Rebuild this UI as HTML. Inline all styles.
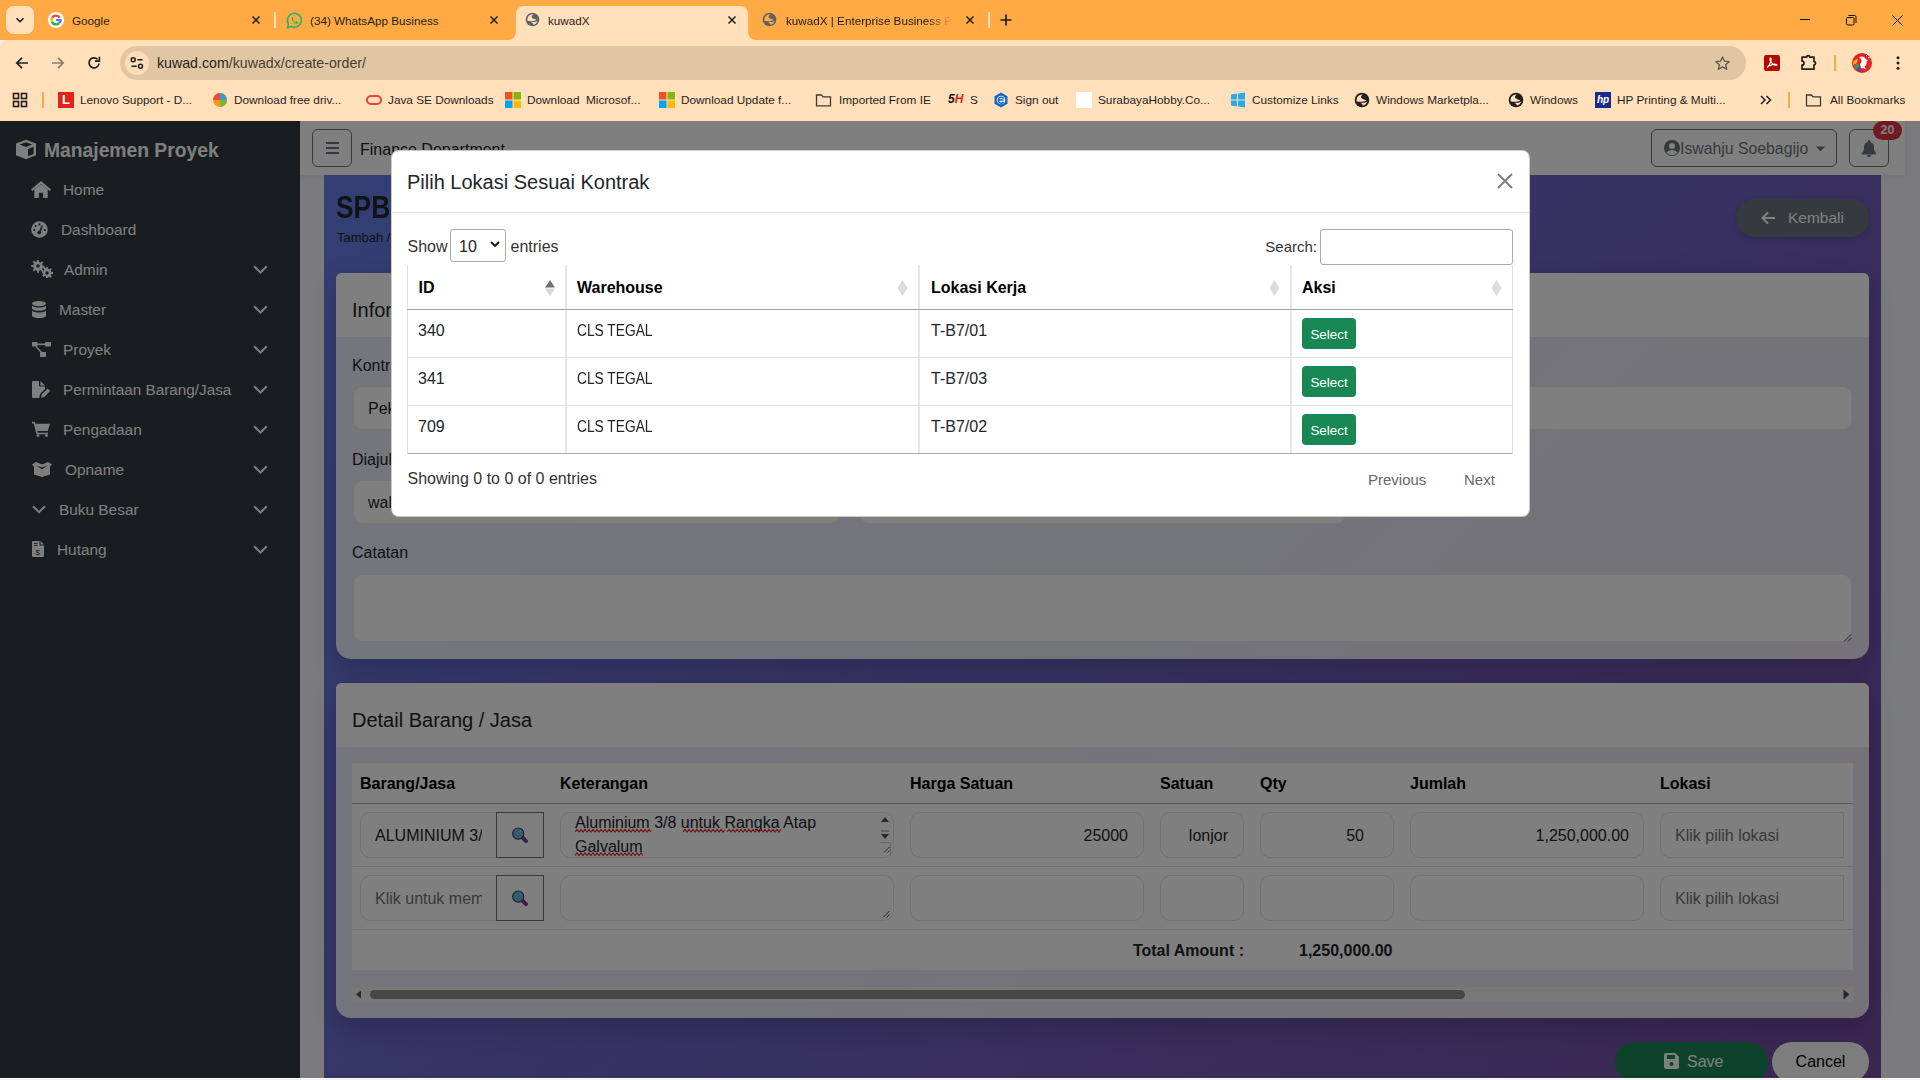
<!DOCTYPE html>
<html><head><meta charset="utf-8">
<style>
*{box-sizing:border-box}
html,body{margin:0;padding:0}
body{width:1920px;height:1080px;overflow:hidden;position:relative;font-family:"Liberation Sans",sans-serif;background:#f5efe8;color:#212529}
.a{position:absolute}
.t{position:absolute;white-space:nowrap;line-height:1}
svg{display:block}
/* chrome */
#tabs{left:0;top:0;width:1920px;height:40px;background:#FFAA45}
#toolbar{left:0;top:40px;width:1920px;height:81px;background:#FFE0BB;border-top-left-radius:8px}
.tabtxt{font-size:11.7px;color:#1f1f1f;top:15px}
.bm{font-size:11.8px;color:#1f1f1f;top:95px}
/* page */
#page{left:0;top:121px;width:1920px;height:957px;overflow:hidden;background:#f6f7fa}
</style></head>
<body>
<!-- ================= BROWSER CHROME ================= -->
<div id="tabs" class="a"></div>
<!-- tab dropdown -->
<div class="a" style="left:6px;top:6px;width:28px;height:28px;border-radius:8px;background:#FFE0BB"></div>
<svg class="a" style="left:14px;top:14px" width="12" height="12" viewBox="0 0 12 12"><path d="M2.5 4.2 6 7.7 9.5 4.2" fill="none" stroke="#1f1f1f" stroke-width="1.6"/></svg>
<!-- tab 1 Google -->
<svg class="a" style="left:48px;top:12px" width="16" height="16" viewBox="0 0 16 16"><circle cx="8" cy="8" r="8" fill="#fff"/><circle cx="8" cy="8" r="4.4" fill="none" stroke="#4285F4" stroke-width="2.4" stroke-dasharray="3.456 27.646" stroke-dashoffset="-0.000"/><circle cx="8" cy="8" r="4.4" fill="none" stroke="#34A853" stroke-width="2.4" stroke-dasharray="8.063 27.646" stroke-dashoffset="-3.456"/><circle cx="8" cy="8" r="4.4" fill="none" stroke="#FBBC05" stroke-width="2.4" stroke-dasharray="4.608 27.646" stroke-dashoffset="-11.519"/><circle cx="8" cy="8" r="4.4" fill="none" stroke="#EA4335" stroke-width="2.4" stroke-dasharray="8.294 27.646" stroke-dashoffset="-16.127"/><rect x="8" y="6.9" width="5.6" height="2.3" fill="#4285F4"/></svg>
<div class="t tabtxt" style="left:72px">Google</div>
<svg class="a" style="left:250px;top:14px" width="12" height="12" viewBox="0 0 12 12"><path d="M2.5 2.5l7 7M9.5 2.5l-7 7" stroke="#1f1f1f" stroke-width="1.5"/></svg>
<div class="a" style="left:274px;top:12px;width:2px;height:16px;background:#FFE0BB"></div>
<!-- tab 2 WhatsApp -->
<svg class="a" style="left:286px;top:11.5px" width="17" height="17" viewBox="0 0 17 17">
<path d="M8.5 1.3a7 7 0 0 0-6 10.6L1.5 15.6l3.8-1a7 7 0 1 0 3.2-13.3z" fill="none" stroke="#24b46a" stroke-width="1.6"/>
<path d="M6.2 5c.3 0 .5 0 .7.5l.6 1.3c.1.2 0 .4-.1.5l-.4.5c-.1.1-.1.3 0 .4.5.9 1.3 1.6 2.2 2 .1.1.3 0 .4-.1l.5-.6c.1-.2.3-.2.5-.1l1.3.6c.2.1.3.3.3.4 0 .8-.7 1.5-1.5 1.5-2.5-.3-4.6-2.3-5-4.8C5.6 5.8 5.8 5 6.2 5z" fill="#24b46a"/>
</svg>
<div class="t tabtxt" style="left:310px">(34) WhatsApp Business</div>
<svg class="a" style="left:488px;top:14px" width="12" height="12" viewBox="0 0 12 12"><path d="M2.5 2.5l7 7M9.5 2.5l-7 7" stroke="#1f1f1f" stroke-width="1.5"/></svg>
<!-- active tab -->
<div class="a" style="left:516px;top:6px;width:232px;height:40px;background:#FFE0BB;border-radius:8px 8px 0 0"></div>
<div class="a" style="left:508px;top:32px;width:8px;height:8px;background:#FFE0BB"></div>
<div class="a" style="left:500px;top:24px;width:16px;height:16px;background:#FFAA45;border-radius:0 0 8px 0"></div>
<div class="a" style="left:748px;top:32px;width:8px;height:8px;background:#FFE0BB"></div>
<div class="a" style="left:748px;top:24px;width:16px;height:16px;background:#FFAA45;border-radius:0 0 0 8px"></div>
<svg class="a" style="left:525px;top:12px" width="15" height="15" viewBox="0 0 16 16"><circle cx="8" cy="8" r="7.3" fill="#5f6368"/><clipPath id="gc525"><circle cx="8" cy="8" r="5.5"/></clipPath><g clip-path="url(#gc525)" fill="#FFE0BB"><path d="M1.5 9.5V1.5H9.6C8.2 3.2 6.6 4.2 7.2 5.8 7.8 7.2 10.4 7.4 12.4 8.4 10 9.8 6.6 9.9 4.6 9.7 3.4 9.6 2.4 9.6 1.5 9.5z"/><path d="M6.2 10.7C8.4 10.8 10.4 10.9 12 10.2 12.8 9.8 13.8 9.4 14.5 9.2V14.5H8.2C9.2 13.2 8.8 11.8 6.2 10.7z"/></g></svg>
<div class="t tabtxt" style="left:548px">kuwadX</div>
<svg class="a" style="left:726px;top:14px" width="12" height="12" viewBox="0 0 12 12"><path d="M2.5 2.5l7 7M9.5 2.5l-7 7" stroke="#1f1f1f" stroke-width="1.5"/></svg>
<!-- tab 4 -->
<svg class="a" style="left:762px;top:12px" width="15" height="15" viewBox="0 0 16 16"><circle cx="8" cy="8" r="7.3" fill="#5f6368"/><clipPath id="gc762"><circle cx="8" cy="8" r="5.5"/></clipPath><g clip-path="url(#gc762)" fill="#FFAA45"><path d="M1.5 9.5V1.5H9.6C8.2 3.2 6.6 4.2 7.2 5.8 7.8 7.2 10.4 7.4 12.4 8.4 10 9.8 6.6 9.9 4.6 9.7 3.4 9.6 2.4 9.6 1.5 9.5z"/><path d="M6.2 10.7C8.4 10.8 10.4 10.9 12 10.2 12.8 9.8 13.8 9.4 14.5 9.2V14.5H8.2C9.2 13.2 8.8 11.8 6.2 10.7z"/></g></svg>
<div class="t tabtxt" style="left:786px;width:166px;overflow:hidden;-webkit-mask-image:linear-gradient(90deg,#000 85%,transparent)">kuwadX | Enterprise Business Platform</div>
<svg class="a" style="left:964px;top:14px" width="12" height="12" viewBox="0 0 12 12"><path d="M2.5 2.5l7 7M9.5 2.5l-7 7" stroke="#1f1f1f" stroke-width="1.5"/></svg>
<div class="a" style="left:988px;top:12px;width:2px;height:16px;background:#FFE0BB"></div>
<svg class="a" style="left:999px;top:13px" width="14" height="14" viewBox="0 0 14 14"><path d="M7 1.5v11M1.5 7h11" stroke="#1f1f1f" stroke-width="1.7"/></svg>
<!-- window controls -->
<div class="a" style="left:1800px;top:19px;width:10px;height:1px;background:#111"></div>
<svg class="a" style="left:1844px;top:13px" width="14" height="14" viewBox="0 0 14 14"><rect x="2.5" y="4.5" width="7.5" height="7.5" rx="1.2" fill="none" stroke="#111" stroke-width="1"/><path d="M4.5 2.5H10.5A1.5 1.5 0 0 1 12 4V10" fill="none" stroke="#111" stroke-width="1"/></svg>
<svg class="a" style="left:1892px;top:15px" width="11" height="11" viewBox="0 0 11 11"><path d="M.5.5l10 10M10.5.5l-10 10" stroke="#111" stroke-width="1"/></svg>
<div id="toolbar" class="a"></div>
<div class="a" style="left:1912px;top:40px;width:8px;height:8px;background:#FFE0BB"></div>
<!-- nav -->
<svg class="a" style="left:14px;top:55px" width="16" height="16" viewBox="0 0 16 16"><path d="M14 8H3M8 2.8 2.8 8 8 13.2" fill="none" stroke="#1f1f1f" stroke-width="1.7"/></svg>
<svg class="a" style="left:50px;top:55px" width="16" height="16" viewBox="0 0 16 16"><path d="M2 8h11M8 2.8 13.2 8 8 13.2" fill="none" stroke="#8a7d6e" stroke-width="1.7"/></svg>
<svg class="a" style="left:86px;top:55px" width="16" height="16" viewBox="0 0 16 16"><path d="M13 8.5A5 5 0 1 1 11.5 4.3" fill="none" stroke="#1f1f1f" stroke-width="1.7"/><path d="M13.4 1.8v4.4H9" fill="none" stroke="#1f1f1f" stroke-width="1.7"/></svg>
<!-- omnibox -->
<div class="a" style="left:120px;top:46px;width:1626px;height:34px;border-radius:17px;background:#E0C6A3"></div>
<div class="a" style="left:125px;top:51px;width:24px;height:24px;border-radius:12px;background:#FDDDB7"></div>
<svg class="a" style="left:129px;top:55px" width="16" height="16" viewBox="0 0 16 16"><path d="M8.3 4.7h5.2M2.5 11.2h5.2" stroke="#1f1f1f" stroke-width="1.5"/><circle cx="4.2" cy="4.7" r="2" fill="none" stroke="#1f1f1f" stroke-width="1.5"/><circle cx="11.5" cy="11.2" r="2" fill="none" stroke="#1f1f1f" stroke-width="1.5"/></svg>
<div class="t" style="left:157px;top:56px;font-size:14.2px;color:#1f1f1f">kuwad.com<span style="color:#4a4036">/kuwadx/create-order/</span></div>
<svg class="a" style="left:1713.5px;top:54.5px" width="17" height="17" viewBox="0 0 17 17"><path d="M8.5 2l2 4.2 4.6.5-3.4 3.1 1 4.5-4.2-2.4-4.2 2.4 1-4.5-3.4-3.1 4.6-.5z" fill="none" stroke="#5b5650" stroke-width="1.3" stroke-linejoin="round"/></svg>
<!-- extensions -->
<div class="a" style="left:1764px;top:55px;width:16px;height:16px;background:#B30B00;border-radius:2px"></div>
<svg class="a" style="left:1764px;top:55px" width="16" height="16" viewBox="0 0 16 16"><path d="M3 12.5c1.5-1 3-3.5 4-7 .3-1.3.2-2.5-.5-2.5s-.7 1.5 0 3c1 2 3 4 5.5 4.3 1 .1 1.2-.6.5-.9-1.5-.5-5 .2-7.5 1.5C4 11.5 3 12.5 3 12.5z" fill="none" stroke="#fff" stroke-width="1.1"/></svg>
<svg class="a" style="left:1800px;top:54px" width="18" height="17" viewBox="0 0 18 17"><path d="M2 3.2H6.6A1.6 1.6 0 0 1 9.8 3.2H14V7.6A1.6 1.6 0 0 1 14 10.8V15.2H2V11.2A1.8 1.8 0 0 0 2 7.2z" fill="none" stroke="#1f1f1f" stroke-width="1.7" stroke-linejoin="round"/></svg>
<div class="a" style="left:1834px;top:55px;width:2px;height:16px;background:#FFAA45"></div>
<svg class="a" style="left:1852px;top:53px" width="20" height="20" viewBox="0 0 20 20"><circle cx="10" cy="10" r="10" fill="#e4202a"/><path d="M1.5 8 6 5.5 5 10 1 12z" fill="#f5b400"/><path d="M2 12.5 6 10.5 7 15 3.5 16z" fill="#2aa84a"/><path d="M5 15.5 8 13 9 18 6 18z" fill="#1e64c8"/><path d="M7 4c3-1.5 6 0 7 2.5l2 .5-1.5 1.5c.5 2-.5 4-2 5l1.5 3-2.5-1.5c-1 .5-2 .5-2.5 0L8 11c1-1 2-2 1.5-3.5C9 6 8 5 7 4z" fill="#fff"/><path d="M14 3l1.5-1.5M16 5l1.5-.5" stroke="#fff" stroke-width="1"/></svg>
<svg class="a" style="left:1890px;top:55px" width="16" height="16" viewBox="0 0 16 16"><circle cx="8" cy="2.8" r="1.5" fill="#1f1f1f"/><circle cx="8" cy="8" r="1.5" fill="#1f1f1f"/><circle cx="8" cy="13.2" r="1.5" fill="#1f1f1f"/></svg>

<!-- bookmarks -->
<svg class="a" style="left:12px;top:92px" width="16" height="16" viewBox="0 0 16 16"><g fill="none" stroke="#1f1f1f" stroke-width="1.6"><rect x="1.5" y="1.5" width="5" height="5"/><rect x="9.5" y="1.5" width="5" height="5"/><rect x="1.5" y="9.5" width="5" height="5"/><rect x="9.5" y="9.5" width="5" height="5"/></g></svg>
<div class="a" style="left:42px;top:92px;width:2px;height:16px;background:#FFAA45"></div>
<div class="a" style="left:58px;top:92px;width:16px;height:16px;background:#E2231A"></div>
<div class="t" style="left:62px;top:93px;font-size:13px;font-weight:bold;color:#fff">L</div>
<div class="t bm" style="left:80px">Lenovo Support - D...</div>
<svg class="a" style="left:212px;top:92px" width="16" height="16" viewBox="0 0 16 16"><circle cx="8" cy="8" r="7" fill="#f39c12"/><path d="M8 1a7 7 0 0 1 7 7H8z" fill="#3d9ad1"/><path d="M1 8a7 7 0 0 1 7-7v7z" fill="#e84c3d"/><path d="M8 8h7a7 7 0 0 1-7 7z" fill="#7cb342"/></svg>
<div class="t bm" style="left:234px">Download free driv...</div>
<div class="a" style="left:366px;top:95px;width:16px;height:10px;border:2px solid #e8423b;border-radius:6px"></div>
<div class="t bm" style="left:388px">Java SE Downloads</div>
<svg class="a" style="left:505px;top:92px" width="16" height="16" viewBox="0 0 16 16"><rect x="0" y="0" width="7.5" height="7.5" fill="#F25022"/><rect x="8.5" y="0" width="7.5" height="7.5" fill="#7FBA00"/><rect x="0" y="8.5" width="7.5" height="7.5" fill="#00A4EF"/><rect x="8.5" y="8.5" width="7.5" height="7.5" fill="#FFB900"/></svg>
<div class="t bm" style="left:527px">Download&nbsp; Microsof...</div>
<svg class="a" style="left:659px;top:92px" width="16" height="16" viewBox="0 0 16 16"><rect x="0" y="0" width="7.5" height="7.5" fill="#F25022"/><rect x="8.5" y="0" width="7.5" height="7.5" fill="#7FBA00"/><rect x="0" y="8.5" width="7.5" height="7.5" fill="#00A4EF"/><rect x="8.5" y="8.5" width="7.5" height="7.5" fill="#FFB900"/></svg>
<div class="t bm" style="left:681px">Download Update f...</div>
<svg class="a" style="left:815px;top:92px" width="17" height="16" viewBox="0 0 17 16"><path d="M1.5 3h5l1.5 1.8h7.5v9H1.5z" fill="none" stroke="#3a3a3a" stroke-width="1.3"/></svg>
<div class="t bm" style="left:839px">Imported From IE</div>
<div class="t" style="left:948px;top:93px;font-size:12px;font-weight:bold;font-style:italic;color:#111">5<span style="color:#d22">H</span></div>
<div class="t bm" style="left:970px">S</div>
<svg class="a" style="left:993px;top:92px" width="16" height="16" viewBox="0 0 16 16"><path d="M8 .5 14.5 4.2v7.6L8 15.5 1.5 11.8V4.2z" fill="#1565c0"/><circle cx="8" cy="8" r="4.3" fill="#fff"/><path d="M5.3 8h5.4M10.6 10A3 3 0 1 1 10.7 6.5" fill="none" stroke="#1565c0" stroke-width="1.5"/></svg>
<div class="t bm" style="left:1015px">Sign out</div>
<div class="a" style="left:1076px;top:92px;width:16px;height:16px;background:#fff"></div>
<div class="t bm" style="left:1098px">SurabayaHobby.Co...</div>
<svg class="a" style="left:1230px;top:92px" width="16" height="16" viewBox="0 0 16 16"><path d="M1 2.5l6-.9v5.9H1zM8 1.5l7-1v7H8zM1 8.5h6v5.9l-6-.9zM8 8.5h7v7l-7-1z" fill="#29A8EA"/></svg>
<div class="t bm" style="left:1252px">Customize Links</div>
<svg class="a" style="left:1354px;top:92px" width="16" height="16" viewBox="0 0 16 16"><circle cx="8" cy="8" r="7.3" fill="#1f1f1f"/><clipPath id="gc1354"><circle cx="8" cy="8" r="5.5"/></clipPath><g clip-path="url(#gc1354)" fill="#FFE0BB"><path d="M1.5 9.5V1.5H9.6C8.2 3.2 6.6 4.2 7.2 5.8 7.8 7.2 10.4 7.4 12.4 8.4 10 9.8 6.6 9.9 4.6 9.7 3.4 9.6 2.4 9.6 1.5 9.5z"/><path d="M6.2 10.7C8.4 10.8 10.4 10.9 12 10.2 12.8 9.8 13.8 9.4 14.5 9.2V14.5H8.2C9.2 13.2 8.8 11.8 6.2 10.7z"/></g></svg>
<div class="t bm" style="left:1376px">Windows Marketpla...</div>
<svg class="a" style="left:1508px;top:92px" width="16" height="16" viewBox="0 0 16 16"><circle cx="8" cy="8" r="7.3" fill="#1f1f1f"/><clipPath id="gc1508"><circle cx="8" cy="8" r="5.5"/></clipPath><g clip-path="url(#gc1508)" fill="#FFE0BB"><path d="M1.5 9.5V1.5H9.6C8.2 3.2 6.6 4.2 7.2 5.8 7.8 7.2 10.4 7.4 12.4 8.4 10 9.8 6.6 9.9 4.6 9.7 3.4 9.6 2.4 9.6 1.5 9.5z"/><path d="M6.2 10.7C8.4 10.8 10.4 10.9 12 10.2 12.8 9.8 13.8 9.4 14.5 9.2V14.5H8.2C9.2 13.2 8.8 11.8 6.2 10.7z"/></g></svg>
<div class="t bm" style="left:1530px">Windows</div>
<div class="a" style="left:1595px;top:92px;width:16px;height:16px;background:#1a2a8a"></div>
<div class="t" style="left:1597px;top:95px;font-size:10px;font-style:italic;font-weight:bold;color:#fff">hp</div>
<div class="t bm" style="left:1617px">HP Printing &amp; Multi...</div>
<svg class="a" style="left:1759px;top:94px" width="14" height="12" viewBox="0 0 14 12"><path d="M2 2l4 4-4 4M7.5 2l4 4-4 4" fill="none" stroke="#1f1f1f" stroke-width="1.5"/></svg>
<div class="a" style="left:1788px;top:92px;width:2px;height:16px;background:#FFAA45"></div>
<svg class="a" style="left:1805px;top:92px" width="17" height="16" viewBox="0 0 17 16"><path d="M1.5 3h5l1.5 1.8h7.5v9H1.5z" fill="none" stroke="#3a3a3a" stroke-width="1.3"/></svg>
<div class="t bm" style="left:1830px">All Bookmarks</div>

<!-- ================= PAGE ================= -->
<div id="page" class="a">
<div class="a" style="left:0;top:-121px;width:1920px;height:1080px">
<!-- sidebar -->
<div class="a" style="left:0;top:121px;width:300px;height:960px;background:#343a40"></div>
<svg class="a" style="left:15px;top:139px" width="22" height="21" viewBox="0 0 22 21"><path d="M11 .8 21 4.6v11.6L11 20.2 1 16.2V4.6z" fill="#fff"/><path d="M11 3.3 17.3 5.6 11 8 4.7 5.6z" fill="#343a40"/><path d="M13 10v7.3l5.6-2.3V7.7z" fill="#343a40"/></svg>
<div class="t" style="left:44px;top:140.5px;font-size:19.3px;font-weight:bold;color:#fff">Manajemen Proyek</div>
<!-- menu -->
<svg class="a" style="left:31px;top:181px" width="20" height="17" viewBox="0 0 20 17"><path d="M10 0 20 8.6 18.6 10 10 3 1.4 10 0 8.6z" fill="#fff"/><path d="M3.3 8.6 10 3.3l6.7 5.3V17h-4.6v-5.2H7.9V17H3.3z" fill="#fff"/></svg>
<div class="t" style="left:63px;top:181.5px;font-size:15.4px;color:#fff">Home</div>
<svg class="a" style="left:31px;top:221px" width="17" height="17" viewBox="0 0 17 17"><circle cx="8.5" cy="8.5" r="8.3" fill="#fff"/><g fill="#343a40"><circle cx="8.5" cy="3.4" r="1.1"/><circle cx="4.6" cy="5" r="1.1"/><circle cx="3.2" cy="9" r="1.1"/><circle cx="13.8" cy="9" r="1.1"/><circle cx="8.3" cy="11.6" r="1.9"/><path d="M7.6 11.2 10.8 4.2 12 4.7 9.4 11.9z"/></g></svg>
<div class="t" style="left:61px;top:221.5px;font-size:15.4px;color:#fff">Dashboard</div>
<svg class="a" style="left:31px;top:260px" width="22" height="18" viewBox="0 0 22 18"><g fill="#fff"><path d="M6 0h2v2l1.6.7 1.4-1.4 1.4 1.4-1.4 1.4.7 1.6h2v2h-2l-.7 1.6 1.4 1.4-1.4 1.4L9.6 10l-1.6.7v2H6v-2L4.4 10 3 11.4 1.6 10 3 8.6 2.3 7H.3V5h2L3 3.4 1.6 2 3 .6 4.4 2 6 1.3z"/><path d="M15 7h2v1.6l1.4.6 1.1-1.1 1.4 1.4-1.1 1.1.6 1.4H22v2h-1.6l-.6 1.4 1.1 1.1-1.4 1.4-1.1-1.1-1.4.6V18h-2v-1.6l-1.4-.6-1.1 1.1-1.4-1.4 1.1-1.1-.6-1.4H11.2v-2h1.6l.6-1.4-1.1-1.1 1.4-1.4 1.1 1.1 1.4-.6z"/></g><circle cx="7" cy="6" r="1.8" fill="#343a40"/><circle cx="16" cy="13" r="1.7" fill="#343a40"/></svg>
<div class="t" style="left:64px;top:261.5px;font-size:15.4px;color:#fff">Admin</div>
<svg class="a" style="left:32px;top:301px" width="14" height="17" viewBox="0 0 14 17"><g fill="#fff"><ellipse cx="7" cy="2.6" rx="7" ry="2.6"/><path d="M0 4.6c1.2 1.4 4 2 7 2s5.8-.6 7-2v3.2c-1.2 1.4-4 2-7 2s-5.8-.6-7-2z"/><path d="M0 9.6c1.2 1.4 4 2 7 2s5.8-.6 7-2v4.8C14 15.8 10.9 17 7 17s-7-1.2-7-2.6z"/></g></svg>
<div class="t" style="left:59px;top:301.5px;font-size:15.4px;color:#fff">Master</div>
<svg class="a" style="left:32px;top:342px" width="19" height="15" viewBox="0 0 19 15"><g fill="#fff"><rect x="0" y="0" width="5.5" height="4.5" rx=".8"/><rect x="13" y="0" width="6" height="4.5" rx=".8"/><rect x="8" y="10" width="6" height="5" rx=".8"/><rect x="5" y="1.5" width="8.5" height="1.6"/><path d="M3 4.3h1.8l5.4 6h-2z"/></g></svg>
<div class="t" style="left:63px;top:341.5px;font-size:15.4px;color:#fff">Proyek</div>
<svg class="a" style="left:32px;top:381px" width="19" height="17" viewBox="0 0 19 17"><path d="M0 1.2A1.2 1.2 0 0 1 1.2 0H7v4.4c0 .7.5 1.2 1.2 1.2H13v2.5l-5 5-.6 3.2V17H1.2A1.2 1.2 0 0 1 0 15.8z" fill="#fff"/><path d="M8.4 0 13 4.5H8.4z" fill="#fff"/><path d="M9 16.7l.7-3.2 6-6 2.5 2.5-6 6z" fill="#fff"/></svg>
<div class="t" style="left:63px;top:381.5px;font-size:15.3px;color:#fff">Permintaan Barang/Jasa</div>
<svg class="a" style="left:32px;top:421px" width="18" height="16" viewBox="0 0 18 16"><path d="M0 .8h2.8l.6 2H18l-2.2 7.3H5.2l.5 1.6H16v1.6H4.4L1.8 2.4H0z" fill="#fff"/><circle cx="6" cy="14.6" r="1.4" fill="#fff"/><circle cx="14.4" cy="14.6" r="1.4" fill="#fff"/></svg>
<div class="t" style="left:63px;top:421.5px;font-size:15.4px;color:#fff">Pengadaan</div>
<svg class="a" style="left:32px;top:462px" width="20" height="15" viewBox="0 0 20 15"><path d="M0 2.5 4 0l6 2.4L16 0l4 2.5-2 2v8L10 15 2 12.5v-8z" fill="#fff"/><path d="M4 3.3 10 5.6 16 3.3 10 7.3z" fill="#343a40"/></svg>
<div class="t" style="left:65px;top:461.5px;font-size:15.4px;color:#fff">Opname</div>
<svg class="a" style="left:32px;top:505px" width="14" height="9" viewBox="0 0 14 9"><path d="M1 1.2 7 7.2 13 1.2" fill="none" stroke="#fff" stroke-width="2"/></svg>
<div class="t" style="left:59px;top:501.5px;font-size:15.4px;color:#fff">Buku Besar</div>
<svg class="a" style="left:32px;top:541px" width="12" height="16" viewBox="0 0 12 16"><path d="M0 1.2A1.2 1.2 0 0 1 1.2 0H7.5v3.5c0 .5.4 1 1 1H12v10.3a1.2 1.2 0 0 1-1.2 1.2H1.2A1.2 1.2 0 0 1 0 14.8z" fill="#fff"/><path d="M8.5 0 12 3.5H8.5z" fill="#fff"/><g fill="#343a40"><rect x="2" y="2" width="3.5" height=".9"/><rect x="2" y="4" width="3.5" height=".9"/></g><text x="3.6" y="14" font-size="8" font-family="Liberation Sans" fill="#343a40">$</text></svg>
<div class="t" style="left:57px;top:541.5px;font-size:15.4px;color:#fff">Hutang</div>
<!-- right chevrons -->
<svg class="a" style="left:253px;top:265px" width="15" height="9" viewBox="0 0 15 9"><path d="M1.2 1.2 7.5 7.5 13.8 1.2" fill="none" stroke="#fff" stroke-width="2"/></svg>
<svg class="a" style="left:253px;top:305px" width="15" height="9" viewBox="0 0 15 9"><path d="M1.2 1.2 7.5 7.5 13.8 1.2" fill="none" stroke="#fff" stroke-width="2"/></svg>
<svg class="a" style="left:253px;top:345px" width="15" height="9" viewBox="0 0 15 9"><path d="M1.2 1.2 7.5 7.5 13.8 1.2" fill="none" stroke="#fff" stroke-width="2"/></svg>
<svg class="a" style="left:253px;top:385px" width="15" height="9" viewBox="0 0 15 9"><path d="M1.2 1.2 7.5 7.5 13.8 1.2" fill="none" stroke="#fff" stroke-width="2"/></svg>
<svg class="a" style="left:253px;top:425px" width="15" height="9" viewBox="0 0 15 9"><path d="M1.2 1.2 7.5 7.5 13.8 1.2" fill="none" stroke="#fff" stroke-width="2"/></svg>
<svg class="a" style="left:253px;top:465px" width="15" height="9" viewBox="0 0 15 9"><path d="M1.2 1.2 7.5 7.5 13.8 1.2" fill="none" stroke="#fff" stroke-width="2"/></svg>
<svg class="a" style="left:253px;top:505px" width="15" height="9" viewBox="0 0 15 9"><path d="M1.2 1.2 7.5 7.5 13.8 1.2" fill="none" stroke="#fff" stroke-width="2"/></svg>
<svg class="a" style="left:253px;top:545px" width="15" height="9" viewBox="0 0 15 9"><path d="M1.2 1.2 7.5 7.5 13.8 1.2" fill="none" stroke="#fff" stroke-width="2"/></svg>

<!-- topbar -->
<div class="a" style="left:300px;top:121px;width:1605px;height:54px;background:#fff;box-shadow:0 2px 6px rgba(0,0,0,.08)"></div>
<div class="a" style="left:312px;top:129px;width:40px;height:38px;border:1px solid #6c757d;border-radius:6px"></div>
<svg class="a" style="left:324px;top:140px" width="16" height="16" viewBox="0 0 16 16"><path d="M2 3h13M2 8h13M2 13h13" stroke="#6c757d" stroke-width="2"/></svg>
<div class="t" style="left:360px;top:141.5px;font-size:16px;color:#212529">Finance Department</div>
<div class="a" style="left:1651px;top:129px;width:186px;height:38px;border:1px solid #6c757d;border-radius:6px"></div>
<svg class="a" style="left:1664px;top:140px" width="16" height="16" viewBox="0 0 16 16"><circle cx="8" cy="8" r="8" fill="#6c757d"/><circle cx="8" cy="6" r="3" fill="#fff"/><path d="M2.6 12.8C3.8 10.9 5.7 10 8 10s4.2.9 5.4 2.8A6.9 6.9 0 0 1 8 15.2a6.9 6.9 0 0 1-5.4-2.4z" fill="#fff"/></svg>
<div class="t" style="left:1680px;top:141px;font-size:15.8px;color:#6c757d">Iswahju Soebagijo</div>
<svg class="a" style="left:1816px;top:146px" width="9" height="6" viewBox="0 0 9 6"><path d="M0 .5h9L4.5 5.5z" fill="#6c757d"/></svg>
<div class="a" style="left:1849px;top:129px;width:40px;height:38px;border:1px solid #6c757d;border-radius:6px"></div>
<svg class="a" style="left:1861px;top:140px" width="16" height="17" viewBox="0 0 16 17"><path d="M8 0c.7 0 1.2.5 1.2 1.2v.7A5 5 0 0 1 13 6.8v1.4c0 1.6.6 3.2 1.7 4.4l.3.3a1 1 0 0 1-.7 1.7H1.7a1 1 0 0 1-.7-1.7l.3-.3A6.6 6.6 0 0 0 3 8.2V6.8a5 5 0 0 1 3.8-4.9v-.7C6.8.5 7.3 0 8 0z" fill="#6c757d"/><path d="M6 15h4a2 2 0 0 1-4 0z" fill="#6c757d"/></svg>
<div class="a" style="left:1873px;top:121px;width:29px;height:19px;border-radius:10px;background:#dc3545"></div>
<div class="t" style="left:1873px;top:124px;width:29px;text-align:center;font-size:12.5px;font-weight:bold;color:#fff">20</div>

<!-- content gradient -->
<div class="a" style="left:324px;top:175px;width:1557px;height:905px;background:linear-gradient(135deg,#667eea 0%,#764ba2 100%)"></div>
<div class="t" style="left:336px;top:192.4px;font-size:31px;font-weight:bold;color:#212529;transform:scaleX(.85);transform-origin:0 0">SPB Baru</div>
<div class="t" style="left:337px;top:231px;font-size:13px;color:#212529">Tambah / Buat SPB</div>
<div class="a" style="left:1736px;top:199px;width:133px;height:38px;border-radius:19px;background:#6c757d;box-shadow:0 2px 6px rgba(0,0,0,.15)"></div>
<svg class="a" style="left:1760px;top:210px" width="16" height="16" viewBox="0 0 16 16"><path d="M15 8H2.5M8 2.5 2.5 8 8 13.5" fill="none" stroke="#fff" stroke-width="2"/></svg>
<div class="t" style="left:1788px;top:210.3px;font-size:15.5px;color:#fff">Kembali</div>

<!-- card 1 -->
<div class="a" style="left:336px;top:273px;width:1533px;height:386px;border-radius:6px 6px 15px 15px;background:rgba(255,255,255,.85);overflow:hidden;box-shadow:0 10px 30px rgba(0,0,0,.18)">
  <div class="a" style="left:0;top:0;width:1533px;height:64px;background:#fff"></div>
</div>
<div class="t" style="left:352px;top:300px;font-size:20px;color:#212529">Informasi Umum</div>
<div class="t" style="left:352px;top:357.8px;font-size:16px;color:#212529">Kontrak</div>
<div class="a" style="left:353px;top:386px;width:1499px;height:44px;border-radius:10px;background:#fff;border:1px solid #e9ecef"></div>
<div class="t" style="left:368px;top:400.5px;font-size:16px;color:#212529">Pekerjaan</div>
<div class="t" style="left:352px;top:451.5px;font-size:16px;color:#212529">Diajukan oleh</div>
<div class="a" style="left:353px;top:480px;width:488px;height:44px;border-radius:10px;background:#fff;border:1px solid #e9ecef"></div>
<div class="t" style="left:368px;top:494.5px;font-size:16px;color:#212529">wahyu</div>
<div class="a" style="left:859px;top:480px;width:487px;height:44px;border-radius:10px;background:#fff;border:1px solid #e9ecef"></div>
<div class="t" style="left:352px;top:545.3px;font-size:16px;color:#212529">Catatan</div>
<div class="a" style="left:353px;top:574px;width:1499px;height:68px;border-radius:10px;background:#fff;border:1px solid #e9ecef"></div>
<svg class="a" style="left:1843px;top:633px" width="9" height="9" viewBox="0 0 9 9"><path d="M8.5 1 1 8.5M8.5 5 5 8.5" stroke="#555" stroke-width="1"/></svg>

<!-- card 2 -->
<div class="a" style="left:336px;top:683px;width:1533px;height:335px;border-radius:6px 6px 15px 15px;background:rgba(255,255,255,.85);overflow:hidden;box-shadow:0 10px 30px rgba(0,0,0,.18)">
  <div class="a" style="left:0;top:0;width:1533px;height:64px;background:#fff"></div>
</div>
<div class="t" style="left:352px;top:709.9px;font-size:20px;color:#212529">Detail Barang / Jasa</div>
<div class="a" style="left:352px;top:763px;width:1501px;height:207px;background:#fff"></div>
<div class="a" style="left:352px;top:803px;width:1501px;height:1px;background:#adb5bd"></div>
<div class="a" style="left:352px;top:866px;width:1501px;height:1px;background:#dee2e6"></div>
<div class="a" style="left:352px;top:929px;width:1501px;height:1px;background:#dee2e6"></div>
<div class="t" style="left:360px;top:775.5px;font-size:16px;font-weight:bold;color:#000">Barang/Jasa</div>
<div class="t" style="left:560px;top:775.5px;font-size:16px;font-weight:bold;color:#000">Keterangan</div>
<div class="t" style="left:910px;top:775.5px;font-size:16px;font-weight:bold;color:#000">Harga Satuan</div>
<div class="t" style="left:1160px;top:775.5px;font-size:16px;font-weight:bold;color:#000">Satuan</div>
<div class="t" style="left:1260px;top:775.5px;font-size:16px;font-weight:bold;color:#000">Qty</div>
<div class="t" style="left:1410px;top:775.5px;font-size:16px;font-weight:bold;color:#000">Jumlah</div>
<div class="t" style="left:1660px;top:775.5px;font-size:16px;font-weight:bold;color:#000">Lokasi</div>
<!-- row 1 -->
<div class="a" style="left:360px;top:812px;width:137px;height:46px;border-radius:10px 0 0 10px;background:#fff;border:1px solid #dee2e6"></div>
<div class="t" style="left:375px;top:827.5px;width:107px;overflow:hidden;font-size:16px;color:#212529">ALUMINIUM 3/8</div>
<div class="a" style="left:496px;top:812px;width:48px;height:46px;background:#fff;border:1px solid #6c757d"></div>
<svg class="a" style="left:512px;top:827px" width="17" height="17" viewBox="0 0 17 17"><path d="M10 10.2 14 14.2" stroke="#8a3a90" stroke-width="4" stroke-linecap="round"/><circle cx="6.2" cy="6.6" r="5.6" fill="#66b8d0" stroke="#3a3f7a" stroke-width="1.2"/><circle cx="8.3" cy="4.3" r=".8" fill="#bfe3ee"/></svg>
<div class="a" style="left:560px;top:812px;width:334px;height:46px;border-radius:10px;background:#fff;border:1px solid #dee2e6"></div>
<div class="t" style="left:575px;top:815px;font-size:16px;color:#212529">Aluminium 3/8 untuk Rangka Atap</div>
<div class="t" style="left:575px;top:839.4px;font-size:16px;color:#212529">Galvalum</div>
<svg class="a" style="left:0;top:0" width="1920" height="1080" viewBox="0 0 1920 1080"><path d="M575.0 832.0L577.0 829.5L579.0 832.0L581.0 829.5L583.0 832.0L585.0 829.5L587.0 832.0L589.0 829.5L591.0 832.0L593.0 829.5L595.0 832.0L597.0 829.5L599.0 832.0L601.0 829.5L603.0 832.0L605.0 829.5L607.0 832.0L609.0 829.5L611.0 832.0L613.0 829.5L615.0 832.0L617.0 829.5L619.0 832.0L621.0 829.5L623.0 832.0L625.0 829.5L627.0 832.0L629.0 829.5L631.0 832.0L633.0 829.5L635.0 832.0L637.0 829.5L639.0 832.0L641.0 829.5L643.0 832.0L645.0 829.5L647.0 832.0L649.0 829.5L651.0 832.0 M683.0 832.0L685.0 829.5L687.0 832.0L689.0 829.5L691.0 832.0L693.0 829.5L695.0 832.0L697.0 829.5L699.0 832.0L701.0 829.5L703.0 832.0L705.0 829.5L707.0 832.0L709.0 829.5L711.0 832.0L713.0 829.5L715.0 832.0L717.0 829.5L719.0 832.0L721.0 829.5L723.0 832.0L725.0 829.5 M727.0 832.0L729.0 829.5L731.0 832.0L733.0 829.5L735.0 832.0L737.0 829.5L739.0 832.0L741.0 829.5L743.0 832.0L745.0 829.5L747.0 832.0L749.0 829.5L751.0 832.0L753.0 829.5L755.0 832.0L757.0 829.5L759.0 832.0L761.0 829.5L763.0 832.0L765.0 829.5L767.0 832.0L769.0 829.5L771.0 832.0L773.0 829.5L775.0 832.0L777.0 829.5L779.0 832.0L781.0 829.5 M575.0 855.5L577.0 853.0L579.0 855.5L581.0 853.0L583.0 855.5L585.0 853.0L587.0 855.5L589.0 853.0L591.0 855.5L593.0 853.0L595.0 855.5L597.0 853.0L599.0 855.5L601.0 853.0L603.0 855.5L605.0 853.0L607.0 855.5L609.0 853.0L611.0 855.5L613.0 853.0L615.0 855.5L617.0 853.0L619.0 855.5L621.0 853.0L623.0 855.5L625.0 853.0L627.0 855.5L629.0 853.0L631.0 855.5L633.0 853.0L635.0 855.5L637.0 853.0L639.0 855.5L641.0 853.0L643.0 855.5" fill="none" stroke="#e02424" stroke-width="1.1"/></svg>
<svg class="a" style="left:879px;top:814px" width="12" height="42" viewBox="0 0 12 42"><path d="M2 8h8L6 3z" fill="#555"/><path d="M2 17h8" stroke="#888" stroke-width="1"/><path d="M2 20h8l-4 5z" fill="#555"/><path d="M1.5 28.5h10v13" fill="none" stroke="#ccc" stroke-width="1"/><path d="M10.5 33 5 38.5M10.5 36.5 8.5 38.5" stroke="#555" stroke-width="1"/></svg>
<div class="a" style="left:910px;top:812px;width:234px;height:46px;border-radius:10px;background:#fff;border:1px solid #dee2e6"></div>
<div class="t" style="left:910px;top:827.5px;width:218px;text-align:right;font-size:16px;color:#212529">25000</div>
<div class="a" style="left:1160px;top:812px;width:84px;height:46px;border-radius:10px;background:#fff;border:1px solid #dee2e6"></div>
<div class="t" style="left:1160px;top:827.5px;width:68px;text-align:right;font-size:16px;color:#212529">lonjor</div>
<div class="a" style="left:1260px;top:812px;width:134px;height:46px;border-radius:10px;background:#fff;border:1px solid #dee2e6"></div>
<div class="t" style="left:1260px;top:827.5px;width:104px;text-align:right;font-size:16px;color:#212529">50</div>
<div class="a" style="left:1410px;top:812px;width:234px;height:46px;border-radius:10px;background:#fff;border:1px solid #dee2e6"></div>
<div class="t" style="left:1410px;top:827.5px;width:219px;text-align:right;font-size:16px;color:#212529">1,250,000.00</div>
<div class="a" style="left:1660px;top:812px;width:184px;height:46px;border-radius:10px 0 0 10px;background:#fff;border:1px solid #dee2e6"></div>
<div class="t" style="left:1675px;top:827.5px;font-size:16px;color:#6c757d">Klik pilih lokasi</div>
<!-- row 2 -->
<div class="a" style="left:360px;top:875px;width:137px;height:46px;border-radius:10px 0 0 10px;background:#fff;border:1px solid #dee2e6"></div>
<div class="t" style="left:375px;top:890.5px;width:107px;overflow:hidden;font-size:16px;color:#6c757d">Klik untuk memilih</div>
<div class="a" style="left:496px;top:875px;width:48px;height:46px;background:#fff;border:1px solid #6c757d"></div>
<svg class="a" style="left:512px;top:890px" width="17" height="17" viewBox="0 0 17 17"><path d="M10 10.2 14 14.2" stroke="#8a3a90" stroke-width="4" stroke-linecap="round"/><circle cx="6.2" cy="6.6" r="5.6" fill="#66b8d0" stroke="#3a3f7a" stroke-width="1.2"/><circle cx="8.3" cy="4.3" r=".8" fill="#bfe3ee"/></svg>
<div class="a" style="left:560px;top:875px;width:334px;height:46px;border-radius:10px;background:#fff;border:1px solid #dee2e6"></div>
<svg class="a" style="left:880px;top:908px" width="10" height="10" viewBox="0 0 10 10"><path d="M9.5 3 3 9.5M9.5 6.5 6.5 9.5" stroke="#555" stroke-width="1"/></svg>
<div class="a" style="left:910px;top:875px;width:234px;height:46px;border-radius:10px;background:#fff;border:1px solid #dee2e6"></div>
<div class="a" style="left:1160px;top:875px;width:84px;height:46px;border-radius:10px;background:#fff;border:1px solid #dee2e6"></div>
<div class="a" style="left:1260px;top:875px;width:134px;height:46px;border-radius:10px;background:#fff;border:1px solid #dee2e6"></div>
<div class="a" style="left:1410px;top:875px;width:234px;height:46px;border-radius:10px;background:#fff;border:1px solid #dee2e6"></div>
<div class="a" style="left:1660px;top:875px;width:184px;height:46px;border-radius:10px 0 0 10px;background:#fff;border:1px solid #dee2e6"></div>
<div class="t" style="left:1675px;top:890.5px;font-size:16px;color:#6c757d">Klik pilih lokasi</div>
<!-- total -->
<div class="t" style="left:1044px;top:943px;width:200px;text-align:right;font-size:16px;font-weight:bold;color:#212529">Total Amount :</div>
<div class="t" style="left:1299px;top:943px;font-size:16px;font-weight:bold;color:#212529">1,250,000.00</div>
<!-- scrollbar -->
<div class="a" style="left:352px;top:987px;width:1501px;height:15px;background:#f1f1f1"></div>
<svg class="a" style="left:354px;top:990px" width="10" height="9" viewBox="0 0 10 9"><path d="M7 .5v8L2 4.5z" fill="#505050"/></svg>
<svg class="a" style="left:1841px;top:989px" width="10" height="11" viewBox="0 0 10 11"><path d="M2.5 .5v10l6-5z" fill="#505050"/></svg>
<div class="a" style="left:370px;top:990px;width:1095px;height:9px;border-radius:5px;background:#8f8f8f"></div>
<!-- save/cancel -->
<div class="a" style="left:1615px;top:1042px;width:153px;height:40px;border-radius:20px;background:#198754"></div>
<svg class="a" style="left:1664px;top:1053px" width="15" height="16" viewBox="0 0 15 16"><path d="M0 2a2 2 0 0 1 2-2h9.2L15 3.8V14a2 2 0 0 1-2 2H2a2 2 0 0 1-2-2z" fill="#fff"/><rect x="3" y="2" width="8" height="4" fill="#198754"/><circle cx="7.5" cy="11" r="2" fill="#198754"/></svg>
<div class="t" style="left:1687px;top:1054px;font-size:16px;color:#fff">Save</div>
<div class="a" style="left:1772px;top:1042px;width:97px;height:40px;border-radius:20px;background:#fbfbfb"></div>
<div class="t" style="left:1772px;top:1054px;width:97px;text-align:center;font-size:16px;color:#000">Cancel</div>
<!-- backdrop -->
<div class="a" style="left:0;top:121px;width:1920px;height:960px;background:rgba(0,0,0,.5)"></div>

<!-- ================= MODAL ================= -->
<div class="a" style="left:390.5px;top:149.5px;width:1139px;height:367px;background:#fff;border:1px solid rgba(0,0,0,.2);border-radius:8px"></div>
<div class="a" style="left:391px;top:212px;width:1138px;height:1px;background:#dee2e6"></div>
<div class="t" style="left:407px;top:171.7px;font-size:20px;color:#212529">Pilih Lokasi Sesuai Kontrak</div>
<svg class="a" style="left:1497px;top:173px" width="16" height="16" viewBox="0 0 16 16"><path d="M1 1l14 14M15 1 1 15" stroke="#808080" stroke-width="2"/></svg>
<div class="t" style="left:407.5px;top:238.7px;font-size:16px;color:#333">Show</div>
<div class="a" style="left:450px;top:229px;width:56px;height:33px;border:1px solid #aaa;border-radius:3px;background:#fff"></div>
<div class="t" style="left:459px;top:238.7px;font-size:16px;color:#212529">10</div>
<svg class="a" style="left:490px;top:241px" width="10" height="7" viewBox="0 0 10 7"><path d="M1 1l4 4 4-4" fill="none" stroke="#111" stroke-width="1.8"/></svg>
<div class="t" style="left:510.5px;top:238.7px;font-size:16px;color:#333">entries</div>
<div class="t" style="left:1217px;top:238.7px;width:100px;text-align:right;font-size:15px;color:#333">Search:</div>
<div class="a" style="left:1320px;top:229px;width:193px;height:36px;border:1px solid #aaa;border-radius:3px;background:#fff"></div>
<!-- modal table -->
<div class="a" style="left:407px;top:265px;width:1106px;height:189px;border-left:1px solid #dee2e6;border-right:1px solid #dee2e6;border-bottom:1px solid #aaa"></div>
<div class="a" style="left:565px;top:265px;width:2px;height:188px;background:#e3e6ea"></div>
<div class="a" style="left:918px;top:265px;width:2px;height:188px;background:#e3e6ea"></div>
<div class="a" style="left:1290px;top:265px;width:2px;height:188px;background:#e3e6ea"></div>
<div class="a" style="left:407px;top:309px;width:1106px;height:1px;background:#a0a0a0"></div>
<div class="a" style="left:407px;top:357px;width:1106px;height:1px;background:#dee2e6"></div>
<div class="a" style="left:407px;top:405px;width:1106px;height:1px;background:#dee2e6"></div>
<div class="t" style="left:418.5px;top:279.5px;font-size:16px;font-weight:bold;color:#000">ID</div>
<div class="t" style="left:577px;top:279.5px;font-size:16px;font-weight:bold;color:#000">Warehouse</div>
<div class="t" style="left:931px;top:279.5px;font-size:16px;font-weight:bold;color:#000">Lokasi Kerja</div>
<div class="t" style="left:1302px;top:279.5px;font-size:16px;font-weight:bold;color:#000">Aksi</div>
<svg class="a" style="left:544px;top:279px" width="12" height="18" viewBox="0 0 12 18"><path d="M1 8.5h10L6 1z" fill="#707070"/><path d="M1 9.5h10L6 17z" fill="#d9d9d9"/></svg>
<svg class="a" style="left:896px;top:279px" width="12" height="18" viewBox="0 0 12 18"><path d="M6.5 1 11.5 9 6.5 17 1.5 9z" fill="#dcdcdc"/></svg>
<svg class="a" style="left:1268px;top:279px" width="12" height="18" viewBox="0 0 12 18"><path d="M6.5 1 11.5 9 6.5 17 1.5 9z" fill="#dcdcdc"/></svg>
<svg class="a" style="left:1490px;top:279px" width="12" height="18" viewBox="0 0 12 18"><path d="M6.5 1 11.5 9 6.5 17 1.5 9z" fill="#dcdcdc"/></svg>
<div class="t" style="left:418px;top:323.4px;font-size:16px;color:#212529">340</div>
<div class="t" style="left:577px;top:323.4px;font-size:16px;color:#212529;transform:scaleX(.86);transform-origin:0 0">CLS TEGAL</div>
<div class="t" style="left:931px;top:323.4px;font-size:16px;color:#212529">T-B7/01</div>
<div class="a" style="left:1302px;top:318px;width:54px;height:31px;border-radius:4px;background:#198754"></div>
<div class="t" style="left:1302px;top:326px;width:54px;text-align:center;font-size:13.4px;color:#fff;margin-top:2px">Select</div>
<div class="t" style="left:418px;top:371.4px;font-size:16px;color:#212529">341</div>
<div class="t" style="left:577px;top:371.4px;font-size:16px;color:#212529;transform:scaleX(.86);transform-origin:0 0">CLS TEGAL</div>
<div class="t" style="left:931px;top:371.4px;font-size:16px;color:#212529">T-B7/03</div>
<div class="a" style="left:1302px;top:366px;width:54px;height:31px;border-radius:4px;background:#198754"></div>
<div class="t" style="left:1302px;top:374px;width:54px;text-align:center;font-size:13.4px;color:#fff;margin-top:2px">Select</div>
<div class="t" style="left:418px;top:419.4px;font-size:16px;color:#212529">709</div>
<div class="t" style="left:577px;top:419.4px;font-size:16px;color:#212529;transform:scaleX(.86);transform-origin:0 0">CLS TEGAL</div>
<div class="t" style="left:931px;top:419.4px;font-size:16px;color:#212529">T-B7/02</div>
<div class="a" style="left:1302px;top:414px;width:54px;height:31px;border-radius:4px;background:#198754"></div>
<div class="t" style="left:1302px;top:422px;width:54px;text-align:center;font-size:13.4px;color:#fff;margin-top:2px">Select</div>
<div class="t" style="left:407.5px;top:470.5px;font-size:16px;color:#333">Showing 0 to 0 of 0 entries</div>
<div class="t" style="left:1368px;top:472px;font-size:15px;color:#666">Previous</div>
<div class="t" style="left:1464px;top:472px;font-size:15px;color:#666">Next</div>
</div>
</div>
<div class="a" style="left:0;top:1078px;width:1920px;height:1px;background:#fdfdfd"></div><div class="a" style="left:0;top:1079px;width:1920px;height:1px;background:#f1f1f1"></div>
</body></html>
